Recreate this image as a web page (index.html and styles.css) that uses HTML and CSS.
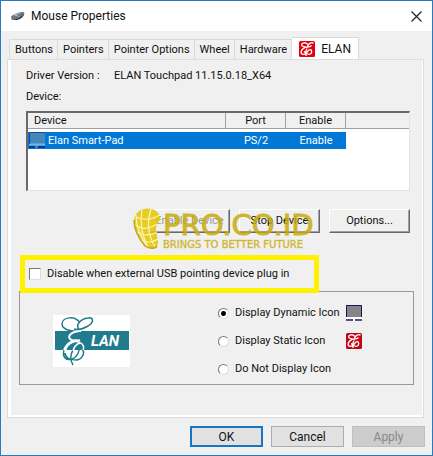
FILE: index.html
```
<!DOCTYPE html>
<html lang="en">
<head>
<meta charset="utf-8">
<title>Mouse Properties</title>
<link rel="stylesheet" href="styles.css">
</head>
<body>
<svg class="defs" aria-hidden="true">
  <symbol id="elan-badge" viewBox="0 0 16 16">
    <rect width="16" height="16" rx="1.5"/>
    <path d="M14.5 2.2C13 .6 9 2.400 8.600 5.200c-.2 1.600 2.600.4 4-.8M8.600 3.200C6.500.9 2.700 1.600 2.600 3.800c0 2 3.400 2.400 6 2.200M9 6.200C5.400 6 2 8.500 2.100 11.200c.1 2.700 3.900 2.800 5.600.4 1.200-1.800 2-3 3.400-3 2.200 0 2 3.400.2 4.400-1.900 1-4-.3-6.300-2.500M8.200 7.500C6.800 9.500 6.400 12.500 7.200 15" fill="none" stroke="#fff" stroke-width="1.300"/>
  </symbol>
  <symbol id="touchpad" viewBox="0 0 16 16">
    <path d="M0 0h16v12H0z" fill="#858585"/>
    <path d="M.5 12V.5h15V12" fill="none" stroke="#17175f"/>
    <path d="M0 12h16v4H0z" fill="#fff"/>
    <path d="M0 15h7M9 15h7" stroke="#17175f" stroke-width="1.500"/>
  </symbol>
</svg>
<main class="window">
  <header class="titlebar">
    <svg class="mouse" viewBox="0 0 15 10" aria-hidden="true"><path d="M1 6C1 4 9 1 12 1c3 0 3 2 1 4-3 3-12 6-12 1z" fill="#6b7880"/><path d="M1 7c1 3 9 1 13-4-1 4-5 6-9 6C2 9 1 8 1 7z" fill="#26323a"/><path d="M4 4c3 0 4 1 5 2M4 4l6-2" stroke="#b7c4cc" fill="none"/></svg>
    <h1>Mouse Properties</h1>
    <button class="close" aria-label="Close"><svg viewBox="0 0 11 11"><path d="M.5.5l10 10M10.500.5l-10 10" stroke="#222" stroke-width="1.200"/></svg></button>
  </header>
  <nav class="tabs">
    <button class="tab">Buttons</button>
    <button class="tab">Pointers</button>
    <button class="tab">Pointer Options</button>
    <button class="tab">Wheel</button>
    <button class="tab">Hardware</button>
    <button class="tab active"><svg class="icon bright" aria-hidden="true"><use href="#elan-badge"/></svg>ELAN</button>
  </nav>
  <section class="panel">
    <dl class="version"><dt>Driver Version :</dt><dd>ELAN Touchpad 11.15.0.18_X64</dd></dl>
    <h2>Device:</h2>
    <div class="list">
      <table>
        <thead><tr><th class="name">Device</th><th>Port</th><th>Enable</th><th class="rest"></th></tr></thead>
        <tbody><tr><td class="name"><svg class="icon pad" viewBox="0 0 16 16" aria-hidden="true"><path d="M0 0h16v16H0z" fill="#4685b7"/><path d="M0 12.500h16" stroke="#69b7f3" stroke-width="2"/><path d="M0 15h6M9 15h7" stroke="#063b9c" stroke-width="2"/><path d="M.5 12V.5H16" fill="none" stroke="#124ca0"/></svg>Elan Smart-Pad</td><td>PS/2</td><td>Enable</td><td class="rest"></td></tr></tbody>
      </table>
    </div>
    <div class="actions">
      <button class="classic" disabled>Enable Device</button>
      <button class="classic">Stop Device</button>
      <button class="classic">Options...</button>
      <div class="watermark">
        <svg class="globe" viewBox="0 0 30 42" aria-hidden="true"><path d="M11 1c8-2 15 2 16 8 1 4-4 6-4 12 0 8 4 12 1 17-3 3-10 3-14-2C5 29 0 20 1 11c1-5 5-9 10-10z" fill="#e6c800"/><path d="M3 9c8 4 15 3 24-2M2 17c8 5 14 4 22-1M4 24c7 4 13 4 20 0M8 32c6 3 11 3 17-1M9 2c-2 12 0 26 6 37M18 1c-4 12-3 26 4 38M3 7c0 10 5 22 10 30" fill="none" stroke="#fff6ad" stroke-width="1.200"/><path d="M1 12c0 10 6 20 11 26 4 3 10 3 12 0" fill="none" stroke="#b99a06" stroke-width="1.500"/></svg>
        <div class="words"><span class="brand">PRO.CO.ID</span><span class="motto">BRINGS TO BETTER FUTURE</span></div>
      </div>
    </div>
    <label class="highlight"><input type="checkbox">Disable when external USB pointing device plug in</label>
    <div class="group">
      <svg class="logo" viewBox="0 0 77 52" role="img" aria-label="ELAN"><path d="M0 0h77v52H0z" fill="#fff"/><path d="M2 16h74v19H2z" fill="#207b8d"/>
        <path d="M26 15C22 9 28 4 35 3c6-1 6 4 0 8-5 3-10 4-14 3M27 8C22 0 9 2 9 9c0 5 8 8 18 7" fill="none" stroke="#207b8d" stroke-width="1.500"/>
        <path d="M28 16c-9 0-14 5-11 8 2 2 8 2 10 1M24 25C15 26 9 34 11 41" fill="none" stroke="#fff" stroke-width="2"/>
        <path d="M11 35c-2 7 2 11 8 9 6-2 7-9 7-9M29 34c4 5-1 11-6 11-7 0-11-3-11-7M20 35c-3 5-3 10 0 15" fill="none" stroke="#207b8d" stroke-width="1.500"/><path d="M12 36c3-9 12-12 17-7 2 2 2 4 1 6M20 36c1-4 3-7 7-8" fill="none" stroke="#fff" stroke-width="1.500"/>
        <text x="38" y="31">LAN</text></svg>
      <fieldset>
        <div class="choice"><label><input type="radio" name="tray" checked>Display Dynamic Icon</label><svg class="icon" aria-hidden="true"><use href="#touchpad"/></svg></div>
        <div class="choice"><label><input type="radio" name="tray">Display Static Icon</label><svg class="icon dark" aria-hidden="true"><use href="#elan-badge"/></svg></div>
        <div class="choice"><label><input type="radio" name="tray">Do Not Display Icon</label></div>
      </fieldset>
    </div>
  </section>
  <footer>
    <button class="ok">OK</button>
    <button>Cancel</button>
    <button disabled>Apply</button>
  </footer>
</main>
</body>
</html>
```
FILE: styles.css
```
* { box-sizing: border-box; }
body { margin: 0; background: #f0f0f0; color: #111; font: 11px/16px Roboto, "Liberation Sans", sans-serif; }
button, input { font: inherit; color: inherit; margin: 0; padding: 0; }
h1, h2, dl, dd { margin: 0; font-size: inherit; font-weight: 400; }
.defs { position: absolute; width: 0; height: 0; }
.window { min-height: 100vh; display: flex; flex-direction: column; border: 1px solid #2b7abc; }
.titlebar { display: flex; align-items: center; height: 30px; padding: 0 10px 0 9px; background: #fff; font: 12px/16px Roboto, sans-serif; }
.mouse { width: 15px; height: 10px; margin-right: 6px; }
.close { margin-left: auto; width: 11px; height: 11px; border: 0; background: none; }
.close svg { display: block; width: 11px; height: 11px; }
.icon { width: 16px; height: 16px; flex: none; }
.bright { fill: #e6000f; }
.dark { fill: #c00812; }
.tabs { display: flex; align-items: flex-end; height: 28px; padding: 0 8px; }
.tab { height: 20px; padding: 0 4px 0 5px; border: 1px solid #d9d9d9; border-width: 1px 1px 0 0; background: #f0f0f0; white-space: nowrap; }
.tab:first-child { border-left-width: 1px; }
.tab.active { display: flex; align-items: center; gap: 6px; height: 22px; padding: 0 7px; background: #fff; font-size: 12px; }
.panel { flex: 1; margin: 0 8px 0 6px; padding: 8px 10px 0; border: 1px solid #dcdcdc; box-shadow: inset 3px 0 #fff, inset -1px -2px #fff; }
.version { display: flex; gap: 16px; padding-left: 8px; }
.version dt { width: 72px; white-space: nowrap; }
h2 { margin: 5px 0 6px 8px; }
.list { height: 80px; margin: 0 3px 0 8px; border: 1px solid #e3e3e3; border-top: 2px solid #696969; border-left: 2px solid #696969; background: #fff; }
table { width: 100%; table-layout: fixed; border-collapse: separate; border-spacing: 0; }
th, td { height: 16px; padding: 0; width: 60px; text-align: center; font-weight: 400; line-height: 15px; }
th { background: #f0f0f0; border: 1px solid #a0a0a0; border-width: 0 1px 1px 0; }
th.name, td.name { width: 198px; text-align: left; }
th.name { padding-left: 6px; }
th.rest, td.rest { width: auto; border-right: 0; }
td { background: #0078d7; color: #fff; border-top: 3px solid #fff; height: 20px; line-height: 17px; }
td.rest { background: none; }
.pad { margin: 0 3px 0 1px; vertical-align: top; }
.actions { position: relative; display: flex; justify-content: flex-end; gap: 9px; margin: 18px 3px 0 0; }
.classic { width: 81px; height: 24px; border: 1px solid; border-color: #fff #696969 #696969 #fff; box-shadow: inset -1px -1px #a0a0a0; background: #f0f0f0; white-space: nowrap; }
.classic:disabled { color: #999; }
.watermark { position: absolute; left: 115px; top: -1px; display: flex; opacity: .85; pointer-events: none; }
.globe { width: 30px; height: 42px; }
.words { padding-top: 4px; color: #c9ab08; white-space: nowrap; }
.words span { display: block; }
.brand { font: 29px/27px "DejaVu Sans", sans-serif; -webkit-text-stroke: 1px #c9ab08; }
.motto { font: 10px/11px "DejaVu Sans", sans-serif; -webkit-text-stroke: 1px #c9ab0855; }
.highlight { display: flex; align-items: center; width: 299px; height: 38px; margin-top: 22px; margin-left: 2px; padding-left: 4px; border: 5px solid #fff200; position: relative; }
input { appearance: none; flex: none; background: #fff; border: 1px solid; border-color: #777 #ddd #ddd #777; }
[type=checkbox] { width: 12px; height: 12px; margin-right: 6px; }
[type=radio] { width: 11px; height: 11px; margin-right: 6px; border-radius: 50%; }
[type=radio]:checked { background: radial-gradient(circle, #000 2px, #fff 3px); }
.group { display: flex; align-items: center; justify-content: space-between; height: 94px; margin: -2px -1px 0 1px; padding: 6px 51px 0 33px; border: 1px solid #999; }
.logo { width: 77px; height: 52px; }
.logo text { font: italic 700 15px Roboto, sans-serif; fill: #fff; }
fieldset { width: 144px; margin: 0; padding: 0; border: 0; display: grid; gap: 12px; }
.choice { display: flex; justify-content: space-between; height: 16px; }
label { display: flex; align-items: center; white-space: nowrap; }
footer { display: flex; justify-content: flex-end; gap: 8px; padding: 8px 7px 8px 0; font-size: 12px; }
footer button { width: 73px; height: 21px; border: 1px solid #adadad; background: #e1e1e1; }
footer .ok { border: 2px solid #1676c4; }
footer button:disabled { background: #ccc; border-color: #bfbfbf; color: #888; }
```
